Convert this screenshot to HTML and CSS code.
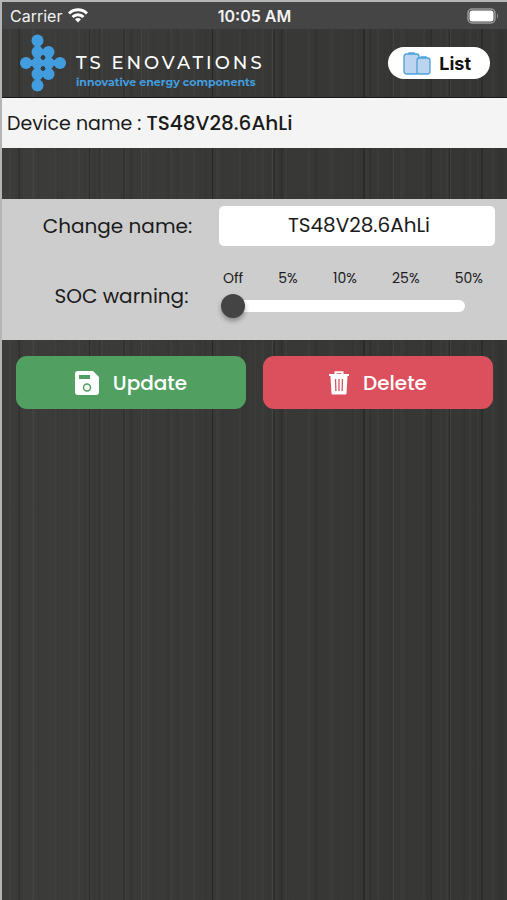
FILE: index.html
```html
<!DOCTYPE html>
<html lang="en">
<head>
<meta charset="utf-8">
<meta name="viewport" content="width=device-width, initial-scale=1">
<title>TS Enovations</title>
<link rel="stylesheet" href="styles.css">
</head>
<body>
<div class="app">
  <div class="status">
    <div class="carrier">Carrier
      <svg width="20" height="15" viewBox="0 0 20 15" fill="none" stroke="#fff" stroke-width="3"><path d="M1 5.500C6 .5 14 .5 19 5.500M4.500 9C7.500 6 12.500 6 15.500 9"/><path d="M7 11.200Q10 8.800 13 11.200L10 14.500Z" fill="#fff" stroke="none"/></svg>
    </div>
    <time class="clock">10:05 AM</time>
    <svg class="battery" width="32" height="16" viewBox="0 0 32 16"><rect x="1" y="1" width="27" height="14" rx="4" fill="none" stroke="#999" stroke-width="1.500"/><rect x="2.500" y="2.500" width="24" height="11" rx="2.500" fill="#fff"/><path d="M30 5.500q2 2.500 0 5z" fill="#999"/></svg>
  </div>
  <header class="header">
    <div class="brand">
      <svg width="46" height="58" viewBox="0 0 46 58" fill="#429ddf" stroke="#429ddf"><path d="M17.500 6v46M6 29h34M17.500 18h11v22h-11z" fill="none" stroke-width="6"/><g stroke="none"><circle cx="17.500" cy="6.500" r="6"/><circle cx="17.500" cy="18" r="6"/><circle cx="28.500" cy="18" r="6"/><circle cx="6" cy="29" r="6"/><circle cx="17.500" cy="29" r="6"/><circle cx="28.500" cy="29" r="6"/><circle cx="40" cy="29" r="6"/><circle cx="17.500" cy="40" r="6"/><circle cx="28.500" cy="40" r="6"/><circle cx="17.500" cy="51.500" r="6"/></g><g fill="#383836" stroke="none"><circle cx="23" cy="23.500" r="2.200"/><circle cx="23" cy="34.500" r="2.200"/></g></svg>
      <div class="brand-text">
        <span class="brand-name">TS ENOVATIONS</span>
        <span class="tagline">innovative energy components</span>
      </div>
    </div>
    <button class="list" type="button">
      <svg width="28" height="23" viewBox="0 0 28 23" fill="#bdd4ee" stroke="#4ba2dc" stroke-width="1.300"><path d="M6 2V1h5v1M18 6V5h5v1" /><rect x="1" y="2" width="15" height="20" rx="2.500"/><rect x="14" y="6" width="13" height="16" rx="2.500"/></svg>
      List
    </button>
  </header>
  <main>
    <p class="device">Device name : <strong>TS48V28.6AhLi</strong></p>
    <form class="form">
      <div class="settings">
        <label class="label" for="name">Change name:</label>
        <input class="name" id="name" type="text" value="TS48V28.6AhLi">
        <label class="label" for="soc">SOC warning:</label>
        <div class="soc">
          <div class="ticks"><span>Off</span><span>5%</span><span>10%</span><span>25%</span><span>50%</span></div>
          <input class="slider" id="soc" type="range" min="0" max="4" value="0">
        </div>
      </div>
      <div class="actions">
        <button class="action update" type="button">
          <svg width="24" height="24" viewBox="0 0 24 24"><path fill="#fff" fill-rule="evenodd" d="M3 0H18L24 6V21a3 3 0 0 1-3 3H3a3 3 0 0 1-3-3V3a3 3 0 0 1 3-3ZM4 4V8H15V4Z"/><circle cx="12" cy="16.500" r="3.500" fill="none" stroke="#519f61" stroke-width="1.500"/></svg>
          Update
        </button>
        <button class="action delete" type="button">
          <svg width="20" height="24" viewBox="0 0 20 24" fill="none" stroke="#fff"><path d="M0 4H20M6.500 3V1.200h7V3" stroke-width="2"/><path d="M2.500 5.500H17.500L16.500 22.500H3.500Z" fill="#fff" stroke-width="2" stroke-linejoin="round"/><path d="M6.500 8l.4 12M10 8v12M13.500 8l-.4 12" stroke="#dc505d" stroke-width="1.300"/></svg>
          Delete
        </button>
      </div>
    </form>
  </main>
</div>
</body>
</html>
```
FILE: styles.css
```css
* { box-sizing: border-box; }

body {
  margin: 0;
  font-family: Poppins, Inter, "Liberation Sans", sans-serif;
  color: #1b1b1b;
}

button, input { font: inherit; }

svg { flex: none; }

.app {
  min-height: 100vh;
  border-top: 2px solid #b5b5b5;
  border-left: 2px solid #b5b5b5;
  background:
    linear-gradient(90deg, transparent 18px, #323231 18px 20px, transparent 20px 89px, #2c2c2b 89px 90px, transparent 90px 99px, #323231 99px 100px, transparent 100px 123px, #323231 123px 125px, transparent 125px 141px, #444441 141px 142px, transparent 142px 212px, #262625 212px 213px, transparent 213px 272px, #444441 272px 273px, #2f2f2e 273px 275px, transparent 275px 281px, #30302f 281px 283px, transparent 283px 363px, #2a2a29 363px 365px, transparent 365px 370px, #2e2e2d 370px 371px, transparent 371px 393px, #434340 393px 394px, transparent 394px 431px, #2c2c2b 431px 432px, transparent 432px 449px, #2a2a29 449px 450px, #434340 450px 451px, transparent 451px 481px, #2c2c2b 481px 483px, transparent 483px) border-box,
    repeating-linear-gradient(90deg, #fff0 0 7px, #ffffff05 7px 9px, #fff0 9px 13px, #0000000a 13px 15px, #fff0 15px 23px),
    repeating-linear-gradient(90deg, #fff0 0 17px, #0000000d 17px 20px, #fff0 20px 31px, #ffffff06 31px 32px, #fff0 32px 37px),
    linear-gradient(90deg, #3c3c3a, #383836 50%, #363635);
}

.status {
  display: grid;
  grid-template-columns: 1fr auto 1fr;
  align-items: center;
  height: 27px;
  padding: 0 8px;
  background: #454545;
  color: #f2f2f2;
  font-family: Inter, "Liberation Sans", sans-serif;
  font-size: 16px;
}

.carrier { display: flex; align-items: center; gap: 6px; }

.clock { font-weight: 600; }

.battery { justify-self: end; }

.header {
  display: flex;
  align-items: center;
  justify-content: space-between;
  height: 69px;
  padding: 0 17px 0 18px;
  border-bottom: 1px solid #161616;
}

.brand { display: flex; align-items: center; gap: 10px; }

.brand-text { display: flex; flex-direction: column; padding-top: 18px; }

.brand-name {
  color: #fff;
  font-family: Montserrat, Lato, sans-serif;
  font-size: 18px;
  font-weight: 500;
  line-height: 20px;
  letter-spacing: 3px;
}

.tagline {
  color: #429ddf;
  font-family: Montserrat, Lato, sans-serif;
  font-size: 11px;
  font-weight: 700;
  line-height: 18px;
}

.list {
  display: flex;
  align-items: center;
  gap: 8px;
  height: 32px;
  padding: 0 19px 0 15px;
  border: 0;
  border-radius: 16px;
  background: #fff;
  color: #111;
  font-family: Inter, "Liberation Sans", sans-serif;
  font-size: 18px;
  font-weight: 700;
}

.device {
  height: 50px;
  margin: 0;
  padding: 0 5px;
  background: #f4f4f4;
  font-size: 19px;
  line-height: 50px;
}

.device strong { font-size: 20px; font-weight: 500; }

.form { margin-top: 51px; }

.settings {
  display: grid;
  grid-template-columns: 44fr 56fr;
  row-gap: 22px;
  padding: 7px 12px 20px 0;
  background: #cdcdcd;
}

.label {
  align-self: center;
  justify-self: center;
  padding-left: 14px;
  font-size: 20px;
}

.settings .label:nth-of-type(2) { padding-top: 4px; padding-left: 22px; }

.name {
  width: 100%;
  min-width: 0;
  height: 40px;
  padding: 0 8px 2px 12px;
  border: 0;
  border-radius: 5px;
  background: #fff;
  color: #1b1b1b;
  font-size: 20px;
  text-align: center;
}

.ticks {
  display: flex;
  justify-content: space-between;
  padding: 0 12px 0 4px;
  font-size: 14px;
  line-height: 20px;
}

.soc { padding-bottom: 2px; }

.slider {
  display: block;
  width: calc(100% - 32px);
  height: 24px;
  margin: 6px 0 0 2px;
  appearance: none;
  background: transparent;
}

.slider::-webkit-slider-runnable-track {
  height: 12px;
  border-radius: 6px;
  background: #fff;
}

.slider::-webkit-slider-thumb {
  appearance: none;
  width: 24px;
  height: 24px;
  margin-top: -6px;
  border-radius: 50%;
  background: #444;
  box-shadow: 0 3px 5px #0005;
}

.actions {
  display: grid;
  grid-template-columns: 1fr 1fr;
  gap: 17px;
  padding: 16px 14px;
}

.action {
  display: flex;
  align-items: center;
  justify-content: center;
  gap: 14px;
  height: 53px;
  border: 0;
  border-radius: 11px;
  color: #fff;
  font-size: 20px;
  font-weight: 500;
}

.update { background: #519f61; }

.delete { background: #dc505d; }
```
